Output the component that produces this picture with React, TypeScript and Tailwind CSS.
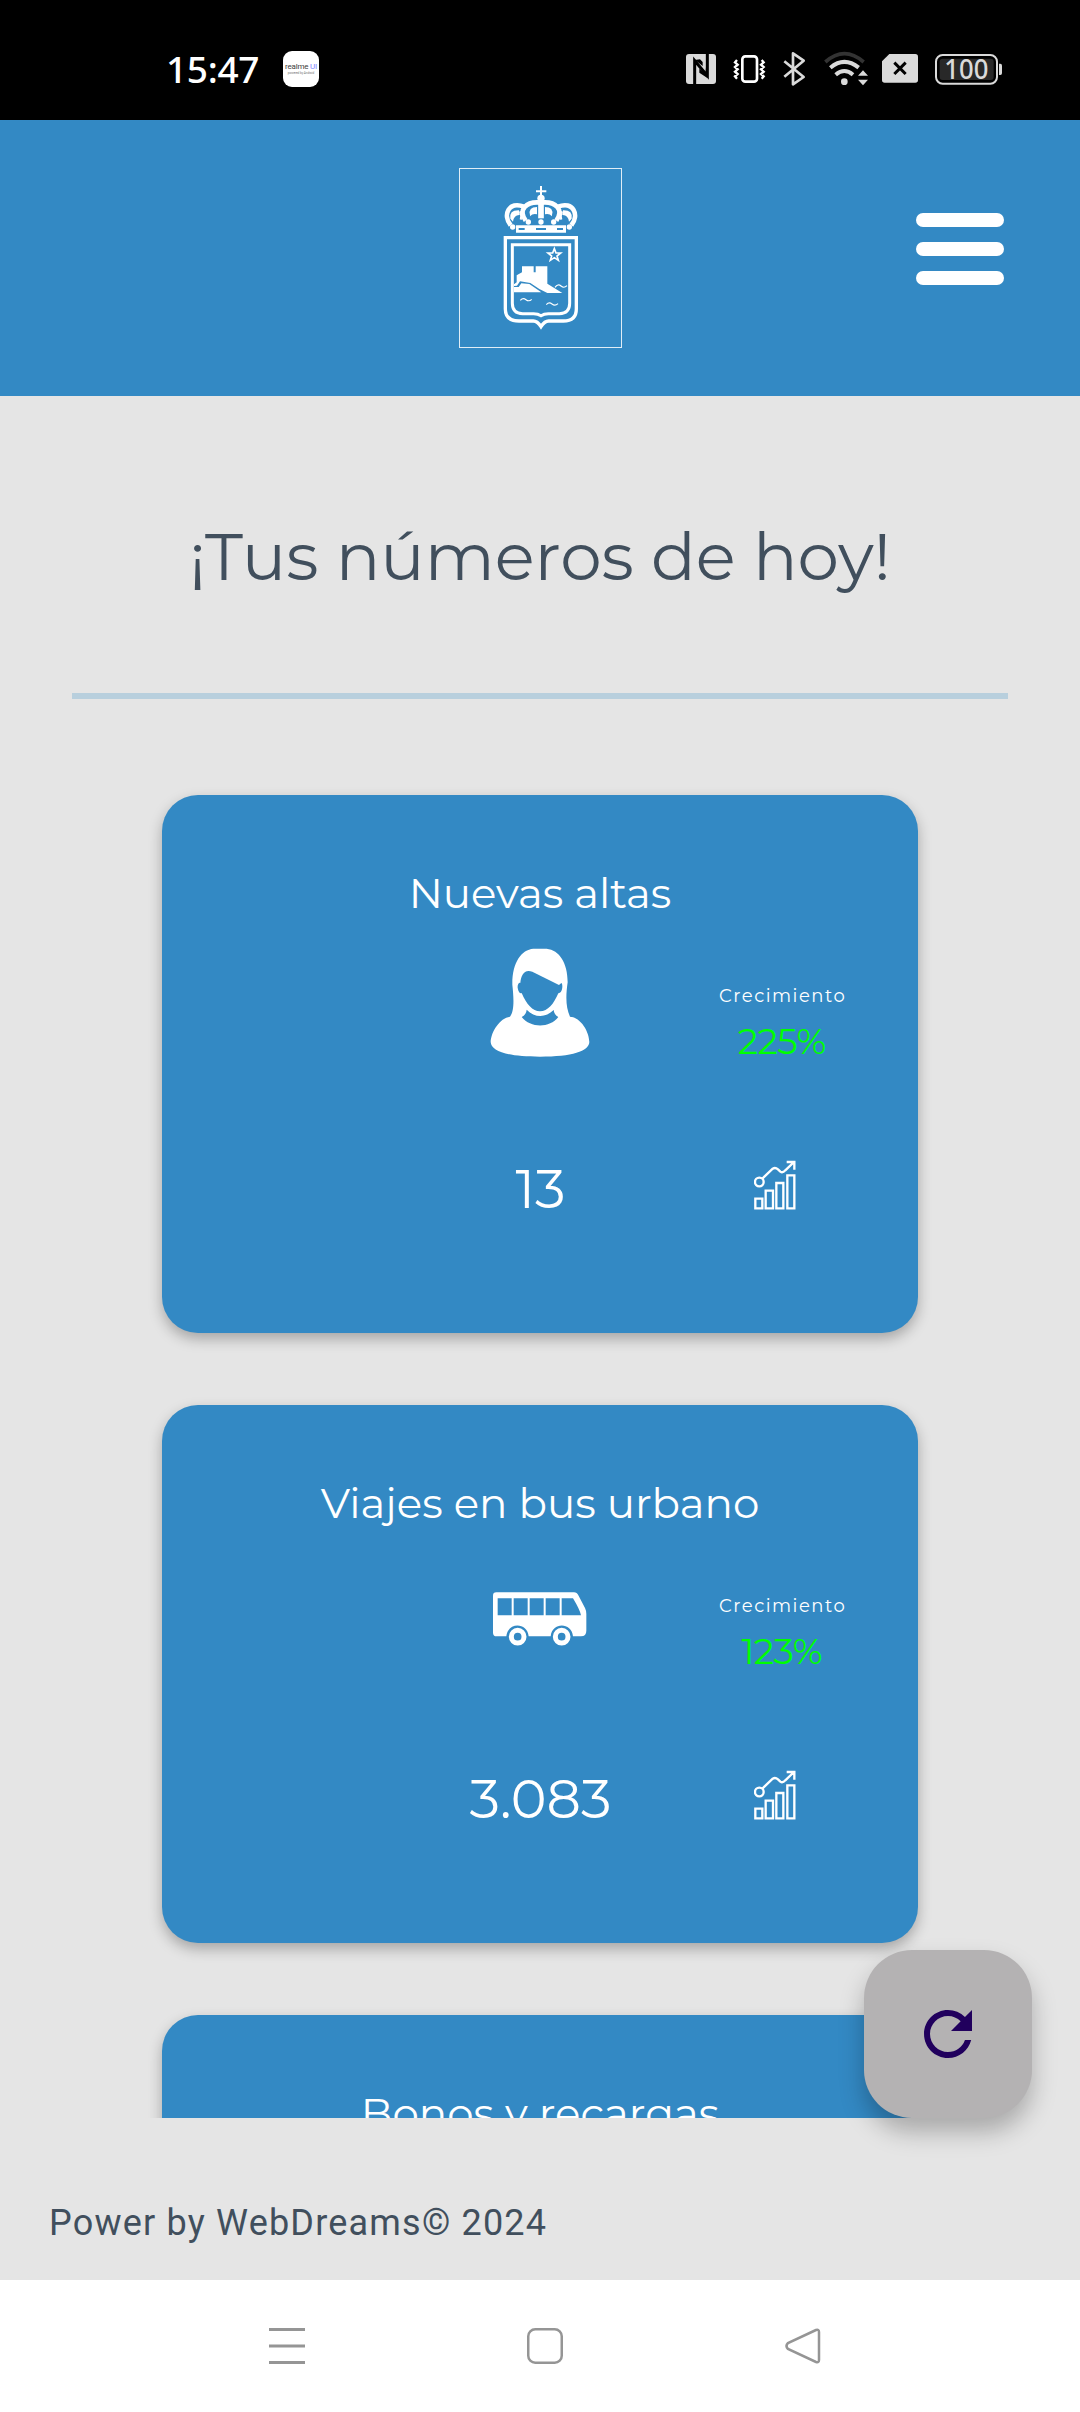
import type { ReactNode } from "react";
import { MdRefresh } from "react-icons/md";

function StatusBar() {
  return (
    <header className="flex h-[120px] shrink-0 items-center bg-black pt-[18px] pl-[166px] pr-[74px] text-white">
      <span className="mb-px w-[94px] whitespace-nowrap font-['Noto_Sans',sans-serif] text-[37px] leading-none font-medium tracking-[-0.3px]">
        15:47
      </span>
      <div className="ml-[23px] flex h-9 w-9 flex-col items-center justify-center rounded-[9px] bg-white leading-none font-['Roboto',sans-serif]">
        <span className="text-[8px] tracking-tight whitespace-nowrap text-neutral-700">
          realme <span className="text-indigo-400">UI</span>
        </span>
        <span className="mt-px text-[3px] text-neutral-500">powered by Android</span>
      </div>
      <svg className="mt-0.5 ml-auto" width="320" height="40" viewBox="78 60 960 120" fill="none">
        <rect x="78" y="72" width="90" height="90" rx="9" fill="#dadada" />
        <path d="M104 162V92L142 137V72" stroke="#000" strokeWidth="9" />
        <path d="M104 90L120 88L128 96V108L108 92M142 72V144L118 128V116L136 132" fill="#000" />
        <rect x="247" y="79" width="44" height="76" rx="9" stroke="#fff" strokeWidth="8" />
        <path d="M231 90l-6 7 8 7-8 7 8 7-8 7 8 7-8 7 6 7M305 90l6 7-8 7 8 7-8 7 8 7-8 7 8 7-6 7" stroke="#fff" strokeWidth="7" />
        <path d="M373 94L431 141L399 163V70L431 92L373 140" stroke="#dadada" strokeWidth="8" strokeLinejoin="round" />
        <path d="M496 96Q553 46 611 96" stroke="#333" strokeWidth="11" />
        <path d="M511 113Q553 78 596 113" stroke="#dadada" strokeWidth="12" />
        <path d="M527 134Q553 112 579 134" stroke="#dadada" strokeWidth="12" />
        <circle cx="553" cy="155" r="10" fill="#dadada" />
        <path d="M594 137h30l-15-16zM594 149h30l-15 17z" fill="#dadada" />
        <path d="M688 72h78q8 0 8 8v70q0 8-8 8h-92q-8 0-8-8V94z" fill="#dadada" />
        <path d="M703 98l34 34M737 98l-34 34" stroke="#000" strokeWidth="9" />
        <rect x="828" y="75" width="183" height="86" rx="20" stroke="#dadada" strokeWidth="6" />
        <rect x="839" y="86" width="162" height="64" rx="9" fill="#282828" />
        <path d="M1017 101h4q5 0 5 6v22q0 6-5 6h-4z" fill="#dadada" />
        <text x="919" y="146" textAnchor="middle" fill="#dadada" fontFamily="Noto Sans, sans-serif" fontSize="79" fontWeight="500" textLength="132" lengthAdjust="spacingAndGlyphs">
          100
        </text>
      </svg>
    </header>
  );
}

function Crest() {
  return (
    <svg width="163" height="180" viewBox="57 54 489 540" fill="none" stroke="#fff">
      <rect x="58.500" y="55.500" width="486" height="537" strokeWidth="3" opacity=".85" />
      <path d="M303 108v30M288 124h31" strokeWidth="6" />
      <circle cx="303" cy="145" r="11" fill="#fff" stroke="none" />
      <path d="M212 226C187 195 206 152 252 170M394 226C419 195 400 152 354 170" strokeWidth="14" />
      <path d="M257 212C233 180 258 153 303 158C348 153 373 180 349 212" strokeWidth="14" />
      <path d="M303 150v55" strokeWidth="17" />
      <path d="M211 206q-4-26 26-25l2 14q-17-1-20 20zM395 206q4-26-26-25l-2 14q17-1 20 20zM270 195q-6-24 21-24v22q-12-4-21 6zM336 195q6-24-21-24v22q12-4 21 6z" fill="#fff" stroke="none" />
      <path d="M240 184q6 14 2 25M366 184q-6 14-2 25" strokeWidth="6" />
      <g fill="#fff" stroke="none">
        <circle cx="218" cy="231" r="8" />
        <circle cx="265" cy="216" r="8" />
        <circle cx="303" cy="216" r="8" />
        <circle cx="341" cy="216" r="8" />
        <circle cx="388" cy="231" r="8" />
        <path d="M228 226h150v22H228z" />
      </g>
      <path d="M236 237h18M288 237h30M351 237h18" stroke="#3389c4" strokeWidth="6" />
      <path d="M196 263H409V477Q409 513 370 513H326Q314 513 303 530Q292 513 280 513H237Q196 513 196 477Z" strokeWidth="10" />
      <path d="M217 284H389V460Q389 491 358 491H325Q312 491 303 497Q294 491 281 491H248Q217 491 217 460Z" strokeWidth="9" />
      <path d="M343 296l5 13h14l-11 9 4 13-12-8-12 8 4-13-11-9h14z" strokeWidth="5" />
      <path d="M222 403l8-6V376l16-9V349h35v18h6V349h35v52l45 28H322l-24-12-27-18-31-5-9 13-9 1z" fill="#fff" stroke="none" />
      <path d="M222 411h14l8-11 24 2 36 25H222z" fill="#fff" stroke="none" />
      <path d="M345 412q9-12 18-4t18-1M241 451q8-9 17-2t17-1M319 464q8-9 17-2t18-1" strokeWidth="3.500" />
    </svg>
  );
}

function PersonIcon() {
  return (
    <svg className="mb-1" width="100" height="110" viewBox="90 55 300 330">
      <path
        fill="#fff"
        fillRule="evenodd"
        d="M220 57H260C298 61 323 99 323 158C317 199 317 233 330 261C363 263 388 307 388 337C387 365 336 381 240 381C144 381 93 365 92 337C93 307 119 265 150 261C164 242 161 202 157 165C156 99 184 60 220 57ZM181 160C177 157 172 166 173 174C175 187 181 193 185 190C199 223 218 245 240 245C264 245 281 223 295 191C303 191 307 180 307 170C307 162 305 160 304 160L297 166L217 126C192 117 183 138 181 160ZM200 240Q199 254 185 262C212 296 269 296 295 262Q282 255 281 241C257 265 224 265 200 240Z"
      />
    </svg>
  );
}

function BusIcon() {
  return (
    <svg className="mt-2 ml-px" width="94" height="54" viewBox="100 68 282 162">
      <path
        fill="#fff"
        fillRule="evenodd"
        d="M110 69H343Q352 69 356 78L376 116Q380 124 380 134V184Q380 201 364 201H340C336 158 277 158 273 201H207C203 158 144 158 140 201H111Q100 201 100 190V79Q100 69 110 69ZM114 87V138H156V87ZM162 87V138H204V87ZM210 87V138H252V87ZM258 87V138H300V87ZM306 87V138H364Q361 122 340 87Z"
      />
      <circle cx="174" cy="202" r="19" fill="none" stroke="#fff" strokeWidth="15" />
      <circle cx="306" cy="202" r="19" fill="none" stroke="#fff" strokeWidth="15" />
    </svg>
  );
}

function GrowthIcon() {
  return (
    <svg width="42" height="50" viewBox="191 601 126 150" fill="none" stroke="#fff" strokeWidth="7">
      <circle cx="207" cy="667" r="13" />
      <path d="M216 657L247 627Q255 622 263 629L270 636Q277 641 285 632L311 607M289 607H312V630" />
      <path d="M195 717h21v29h-21zM226 693h22v53h-22zM258 670h21v76h-21zM291 647h21v99h-21z" />
    </svg>
  );
}

interface StatCardProps {
  title: string;
  icon?: ReactNode;
  value?: string;
  growth?: string;
}

function StatCard({ title, icon, value, growth }: StatCardProps) {
  return (
    <section className="flex h-[538px] w-[756px] shrink-0 flex-col rounded-[36px] bg-[#3389c4] px-3.5 pt-[73px] text-white shadow-[0_6px_14px_rgba(0,0,0,0.28)]">
      <h2 className="text-center text-[42px] leading-[50px] whitespace-nowrap">{title}</h2>
      <div className="mt-[22px] grid h-[130px] grid-cols-3">
        <span />
        <div className="flex h-[130px] items-center justify-center">{icon}</div>
        <div className="flex flex-col items-center pt-11">
          {growth && (
            <>
              <span className="text-[18px] leading-[24px] tracking-[1.500px] whitespace-nowrap">Crecimiento</span>
              <span className="mt-[15px] pr-[2px] text-[36px] leading-[36px] tracking-[-0.750px] text-[#00ff00]">{growth}</span>
            </>
          )}
        </div>
      </div>
      <div className="mt-[85px] grid grid-cols-3">
        <span />
        <span className="pl-px text-center text-[54px] leading-[68px] whitespace-nowrap">{value}</span>
        <span className="flex justify-center pt-[5px] pr-[16px]">{growth && <GrowthIcon />}</span>
      </div>
    </section>
  );
}

export default function App() {
  return (
    <div className="flex h-[2412px] w-[1080px] flex-col overflow-hidden bg-[#e5e5e5] font-['Montserrat','Inter',sans-serif]">
      <StatusBar />
      <nav className="grid h-[276px] shrink-0 grid-cols-3 bg-[#3389c4]">
        <span />
        <div className="flex justify-center pt-12">
          <Crest />
        </div>
        <div className="flex flex-col items-end gap-[15.500px] pt-[93px] pr-[76px]">
          <span className="h-[13.500px] w-[88px] rounded-full bg-white" />
          <span className="h-[13.500px] w-[88px] rounded-full bg-white" />
          <span className="h-[13.500px] w-[88px] rounded-full bg-white" />
        </div>
      </nav>
      <main className="flex h-[1722px] shrink-0 flex-col overflow-hidden px-[72px]">
        <h1 className="pt-[121px] text-center text-[66px] leading-[80px] whitespace-nowrap text-[#414f5d]">
          ¡Tus números de hoy!
        </h1>
        <hr className="mt-24 h-1.5 shrink-0 border-0 bg-[#b8cfdd]" />
        <div className="mt-24 flex flex-col items-center gap-[72px]">
          <StatCard title="Nuevas altas" icon={<PersonIcon />} value="13" growth="225%" />
          <StatCard title="Viajes en bus urbano" icon={<BusIcon />} value="3.083" growth="123%" />
          <StatCard title="Bonos y recargas" />
        </div>
      </main>
      <footer className="relative flex h-[162px] shrink-0 items-center pt-12 pl-[49px] font-['Roboto',sans-serif]">
        <p className="text-[36px] leading-none tracking-[1.200px] text-[#414f5d]">Power by WebDreams© 2024</p>
        <button className="absolute -top-[168px] right-12 flex h-[168px] w-[168px] items-center justify-center rounded-[48px] bg-[#b4b2b3] shadow-[0_14px_24px_rgba(0,0,0,0.26)]">
          <MdRefresh size={72} color="#21005d" />
        </button>
      </footer>
      <div className="flex h-[132px] shrink-0 justify-between bg-white pt-12 pr-[259px] pl-[269px]">
        <svg width="36" height="36" fill="none" stroke="#959595" strokeWidth="3">
          <path d="M0 1.500h36M0 18h36M0 34.500h36" />
        </svg>
        <svg width="36" height="36" fill="none" stroke="#959595" strokeWidth="2.500">
          <rect x="1.250" y="1.250" width="33.500" height="33.500" rx="7" />
        </svg>
        <svg width="36" height="36" fill="none" stroke="#959595" strokeWidth="2.500">
          <path d="M31 2L3 15Q0 18 3 21L31 34Q34 35 34 32V4Q34 1 31 2Z" />
        </svg>
      </div>
    </div>
  );
}
